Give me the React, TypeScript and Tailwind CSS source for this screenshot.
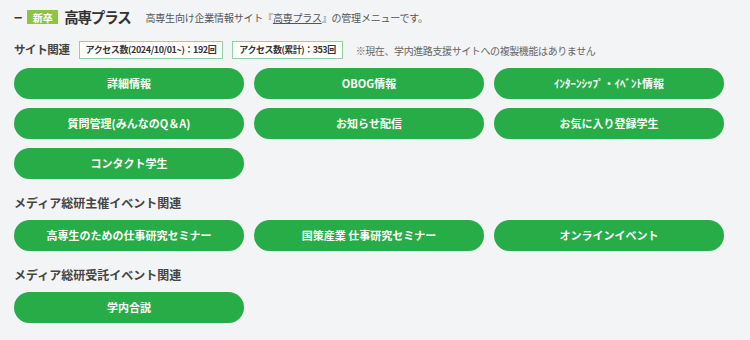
import React from "react";

const Btn = ({ label }: { label: string }) => (
  <button className="h-[31px] rounded-full bg-[#28ac47] text-white text-[11px] font-bold flex items-center justify-center">
    {label}
  </button>
);

export default function App() {
  return (
    <div
      className="w-[750px] h-[340px] bg-[#f3f4f6] text-[#333] overflow-hidden"
      style={{ fontFamily: '"Noto Sans CJK JP", "Noto Sans", sans-serif' }}
    >
      <div className="pl-[14px] pr-[26px] pt-[7px]">
        <div className="flex items-center h-[20px]">
          <span className="text-[14px] font-bold leading-none mr-[5px]">−</span>
          <span className="bg-[#8cc63f] text-white text-[10px] font-bold h-[14px] w-[31px] flex items-center justify-center">新卒</span>
          <span className="ml-[6px] text-[14.5px] tracking-[-1.2px] font-bold leading-none">高専プラス</span>
          <span className="ml-[15px] text-[10px] tracking-[-0.2px] text-[#555]">
            高専生向け企業情報サイト『<span className="underline">高専プラス</span>』の管理メニューです。
          </span>
        </div>
        <div className="flex items-center mt-[14px] h-[18px]">
          <span className="text-[11.5px] font-bold text-[#444] tracking-[-0.4px]">サイト関連</span>
          <span className="ml-[9px] h-[18px] px-[6px] border border-[#8fd4a0] bg-white text-[9px] tracking-[-0.4px] font-bold flex items-center">アクセス数(2024/10/01~)：192回</span>
          <span className="ml-[9px] h-[18px] px-[6px] border border-[#8fd4a0] bg-white text-[9px] tracking-[-0.5px] font-bold flex items-center">アクセス数(累計)：353回</span>
          <span className="ml-[13px] text-[10px] tracking-[-0.4px] text-[#666]">※現在、学内進路支援サイトへの複製機能はありません</span>
        </div>
        <div className="grid grid-cols-3 gap-x-[10px] gap-y-[9px] mt-[9px]">
          <Btn label="詳細情報" />
          <Btn label="OBOG情報" />
          <Btn label="ｲﾝﾀｰﾝｼｯﾌﾟ・ｲﾍﾞﾝﾄ情報" />
          <Btn label="質問管理(みんなのQ＆A)" />
          <Btn label="お知らせ配信" />
          <Btn label="お気に入り登録学生" />
          <Btn label="コンタクト学生" />
        </div>
        <div className="text-[12px] font-bold text-[#444] mt-[16px] h-[16px] leading-[16px]">メディア総研主催イベント関連</div>
        <div className="grid grid-cols-3 gap-x-[10px] mt-[9px]">
          <Btn label="高専生のための仕事研究セミナー" />
          <Btn label="国策産業 仕事研究セミナー" />
          <Btn label="オンラインイベント" />
        </div>
        <div className="text-[12px] font-bold text-[#444] mt-[16px] h-[16px] leading-[16px]">メディア総研受託イベント関連</div>
        <div className="grid grid-cols-3 gap-x-[10px] mt-[9px]">
          <Btn label="学内合説" />
        </div>
      </div>
    </div>
  );
}
